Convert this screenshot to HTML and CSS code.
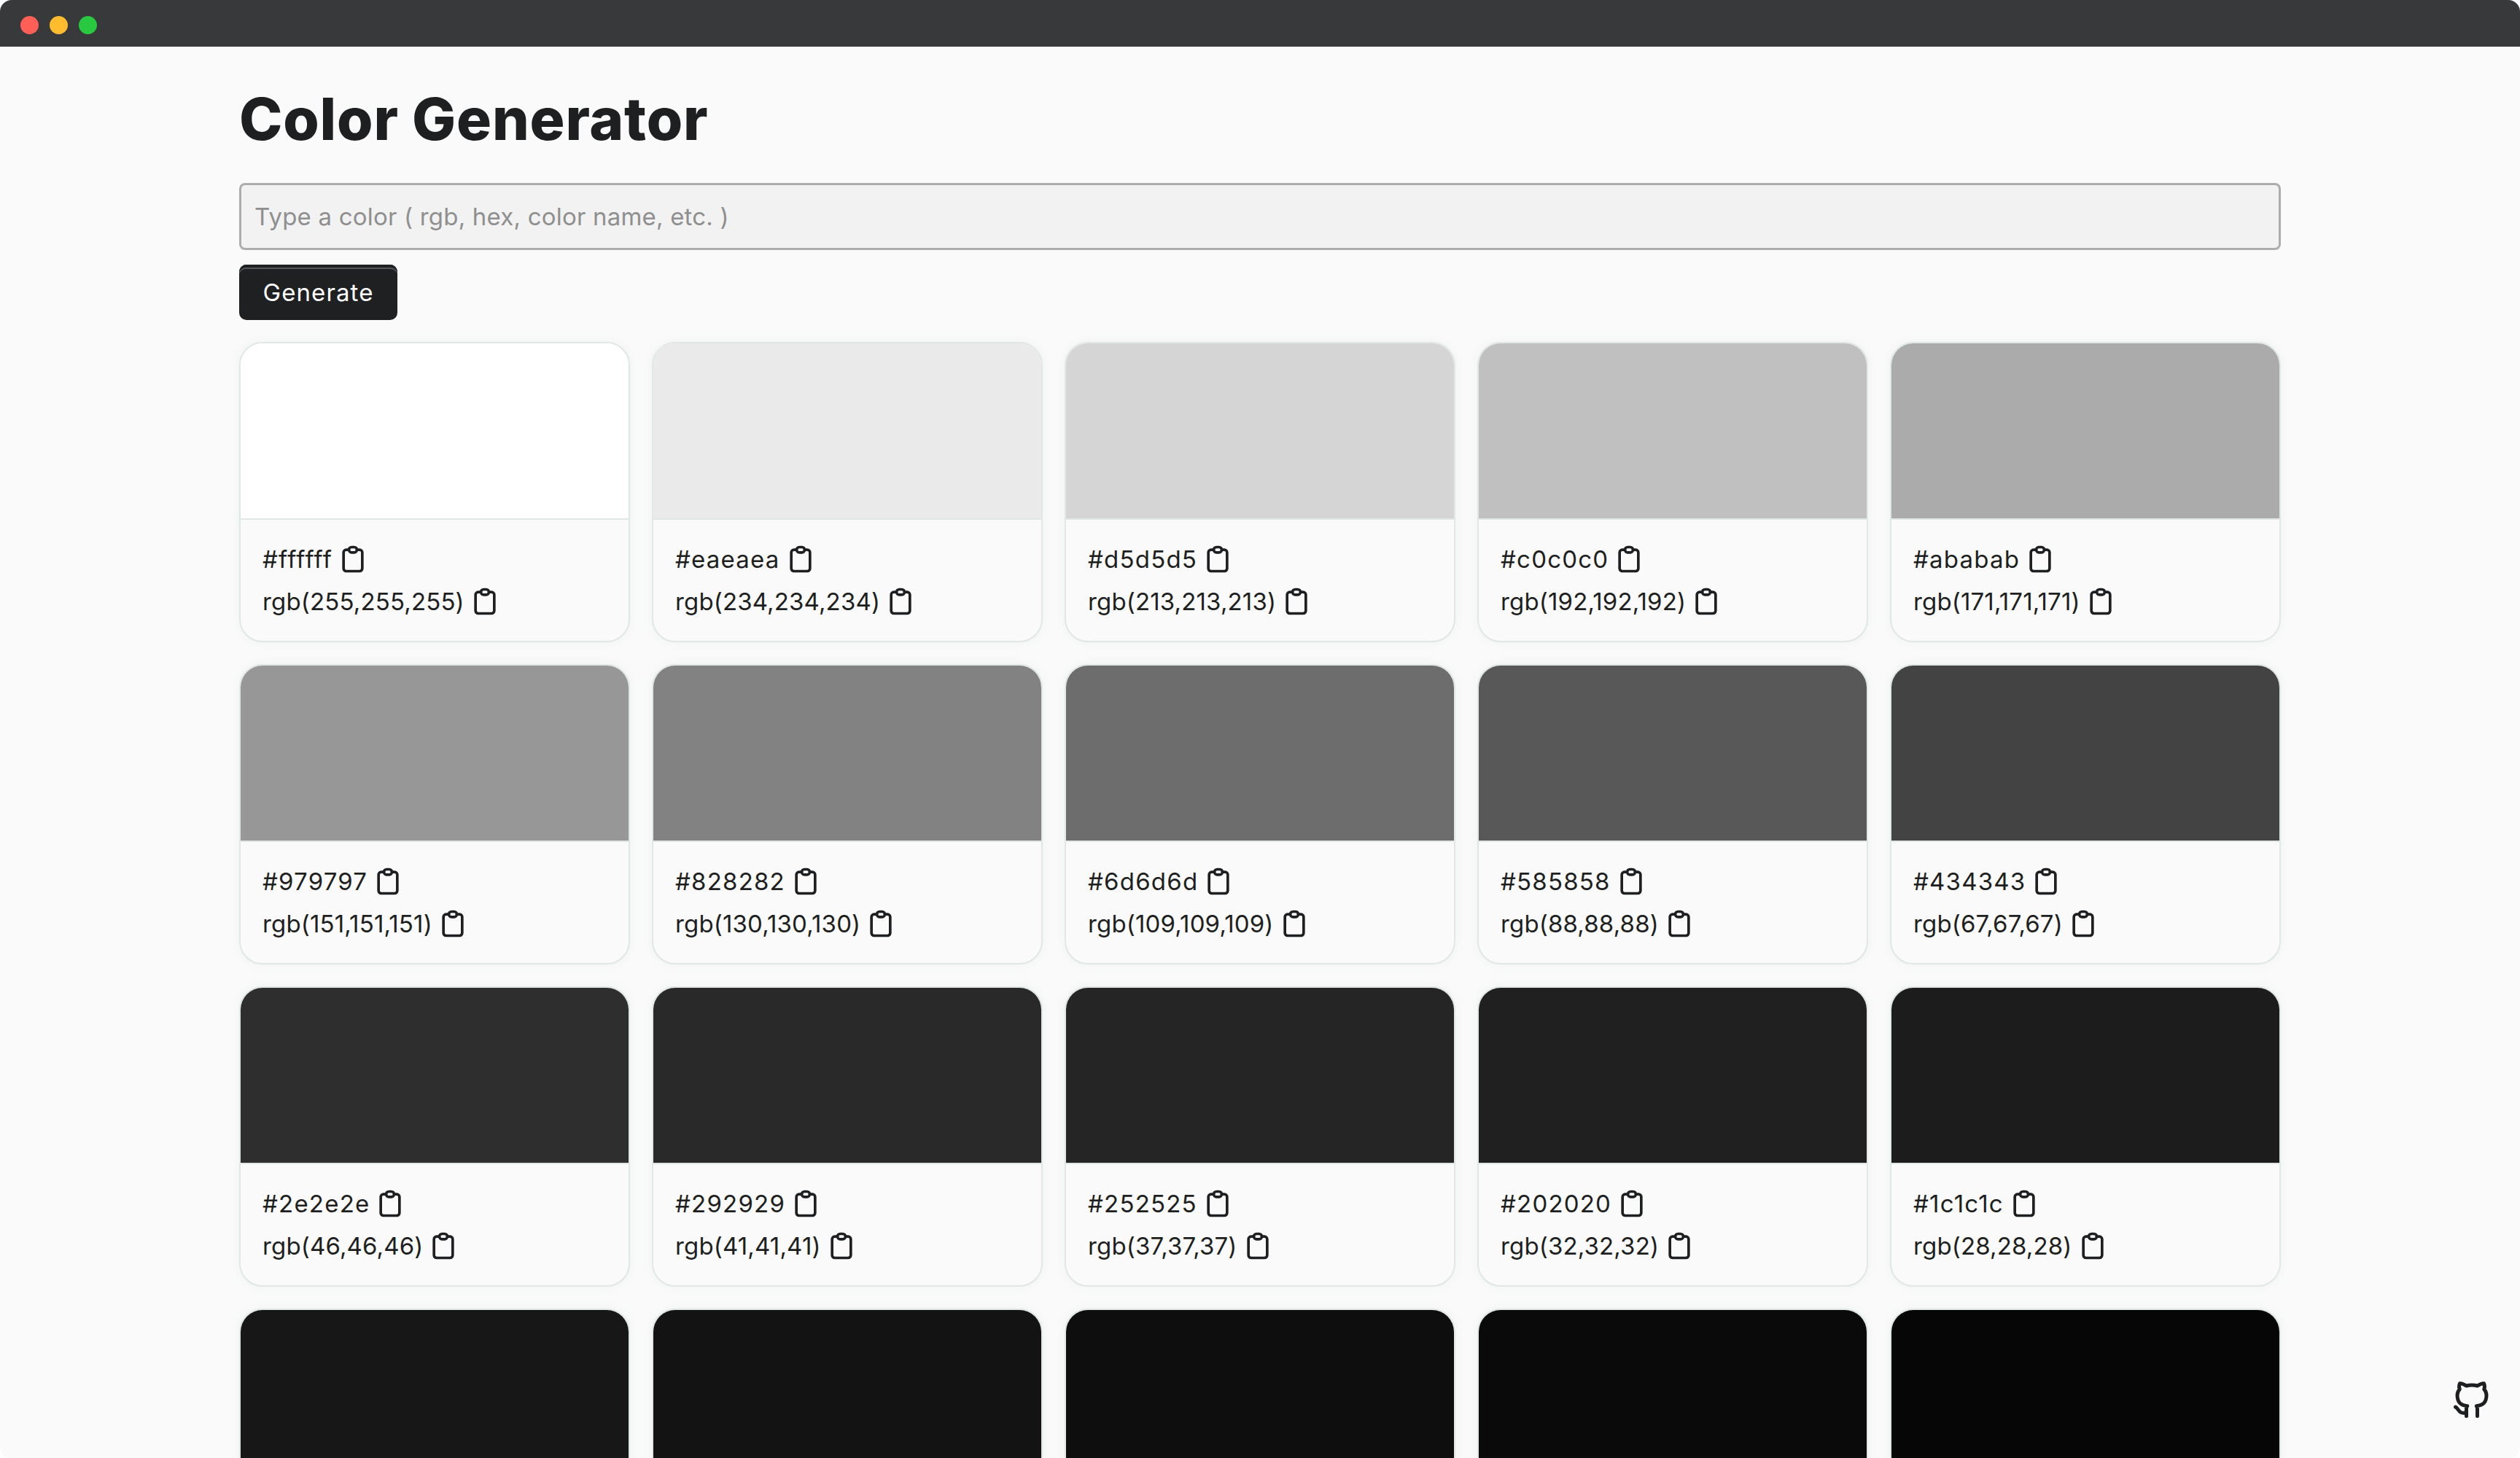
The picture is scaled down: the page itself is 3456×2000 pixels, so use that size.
FILE: index.html
```html
<!DOCTYPE html>
<html lang="en">
<head>
  <meta charset="UTF-8" />
  <title>Color Generator</title>
  <link rel="stylesheet" href="styles.css">
</head>
<body>

<svg class="sprite" width="0" height="0" aria-hidden="true">
  <symbol id="clip" viewBox="0 0 24 24">
    <path d="M9 5h-2a2 2 0 0 0 -2 2v12a2 2 0 0 0 2 2h10a2 2 0 0 0 2 -2v-12a2 2 0 0 0 -2 -2h-2" />
    <rect x="9" y="3" width="6" height="4" rx="2" />
  </symbol>
</svg>

<div class="window">
  <div class="titlebar">
    <span class="dot red"></span>
    <span class="dot yellow"></span>
    <span class="dot green"></span>
  </div>

  <main class="page">
    <h1>Color Generator</h1>
    <input class="color-input" type="text" placeholder="Type a color ( rgb, hex, color name, etc. )" />
    <button class="generate">Generate</button>

    <div class="cards">
      <div class="card">
        <div class="swatch s-ffffff"></div>
        <div class="info">
          <p>#ffffff <svg class="icon"><use href="#clip" /></svg></p>
          <p>rgb(255,255,255) <svg class="icon"><use href="#clip" /></svg></p>
        </div>
      </div>
      <div class="card">
        <div class="swatch s-eaeaea"></div>
        <div class="info">
          <p>#eaeaea <svg class="icon"><use href="#clip" /></svg></p>
          <p>rgb(234,234,234) <svg class="icon"><use href="#clip" /></svg></p>
        </div>
      </div>
      <div class="card">
        <div class="swatch s-d5d5d5"></div>
        <div class="info">
          <p>#d5d5d5 <svg class="icon"><use href="#clip" /></svg></p>
          <p>rgb(213,213,213) <svg class="icon"><use href="#clip" /></svg></p>
        </div>
      </div>
      <div class="card">
        <div class="swatch s-c0c0c0"></div>
        <div class="info">
          <p>#c0c0c0 <svg class="icon"><use href="#clip" /></svg></p>
          <p>rgb(192,192,192) <svg class="icon"><use href="#clip" /></svg></p>
        </div>
      </div>
      <div class="card">
        <div class="swatch s-ababab"></div>
        <div class="info">
          <p>#ababab <svg class="icon"><use href="#clip" /></svg></p>
          <p>rgb(171,171,171) <svg class="icon"><use href="#clip" /></svg></p>
        </div>
      </div>

      <div class="card">
        <div class="swatch s-979797"></div>
        <div class="info">
          <p>#979797 <svg class="icon"><use href="#clip" /></svg></p>
          <p>rgb(151,151,151) <svg class="icon"><use href="#clip" /></svg></p>
        </div>
      </div>
      <div class="card">
        <div class="swatch s-828282"></div>
        <div class="info">
          <p>#828282 <svg class="icon"><use href="#clip" /></svg></p>
          <p>rgb(130,130,130) <svg class="icon"><use href="#clip" /></svg></p>
        </div>
      </div>
      <div class="card">
        <div class="swatch s-6d6d6d"></div>
        <div class="info">
          <p>#6d6d6d <svg class="icon"><use href="#clip" /></svg></p>
          <p>rgb(109,109,109) <svg class="icon"><use href="#clip" /></svg></p>
        </div>
      </div>
      <div class="card">
        <div class="swatch s-585858"></div>
        <div class="info">
          <p>#585858 <svg class="icon"><use href="#clip" /></svg></p>
          <p>rgb(88,88,88) <svg class="icon"><use href="#clip" /></svg></p>
        </div>
      </div>
      <div class="card">
        <div class="swatch s-434343"></div>
        <div class="info">
          <p>#434343 <svg class="icon"><use href="#clip" /></svg></p>
          <p>rgb(67,67,67) <svg class="icon"><use href="#clip" /></svg></p>
        </div>
      </div>

      <div class="card">
        <div class="swatch s-2e2e2e"></div>
        <div class="info">
          <p>#2e2e2e <svg class="icon"><use href="#clip" /></svg></p>
          <p>rgb(46,46,46) <svg class="icon"><use href="#clip" /></svg></p>
        </div>
      </div>
      <div class="card">
        <div class="swatch s-292929"></div>
        <div class="info">
          <p>#292929 <svg class="icon"><use href="#clip" /></svg></p>
          <p>rgb(41,41,41) <svg class="icon"><use href="#clip" /></svg></p>
        </div>
      </div>
      <div class="card">
        <div class="swatch s-252525"></div>
        <div class="info">
          <p>#252525 <svg class="icon"><use href="#clip" /></svg></p>
          <p>rgb(37,37,37) <svg class="icon"><use href="#clip" /></svg></p>
        </div>
      </div>
      <div class="card">
        <div class="swatch s-202020"></div>
        <div class="info">
          <p>#202020 <svg class="icon"><use href="#clip" /></svg></p>
          <p>rgb(32,32,32) <svg class="icon"><use href="#clip" /></svg></p>
        </div>
      </div>
      <div class="card">
        <div class="swatch s-1c1c1c"></div>
        <div class="info">
          <p>#1c1c1c <svg class="icon"><use href="#clip" /></svg></p>
          <p>rgb(28,28,28) <svg class="icon"><use href="#clip" /></svg></p>
        </div>
      </div>

      <!-- last row runs off the bottom of the window -->
      <div class="card"><div class="swatch s-r4a"></div></div>
      <div class="card"><div class="swatch s-r4b"></div></div>
      <div class="card"><div class="swatch s-r4c"></div></div>
      <div class="card"><div class="swatch s-r4d"></div></div>
      <div class="card"><div class="swatch s-r4e"></div></div>
    </div>
  </main>

  <svg class="github" viewBox="0 0 24 24" aria-label="GitHub">
    <path d="M9 19c-4.3 1.4 -4.3 -2.5 -6 -3m12 5v-3.5c0 -1 .1 -1.4 -.5 -2c2.8 -.3 5.5 -1.4 5.5 -6a4.6 4.6 0 0 0 -1.3 -3.2a4.2 4.2 0 0 0 -.1 -3.2s-1.1 -.3 -3.5 1.3a12.3 12.3 0 0 0 -6.2 0c-2.4 -1.6 -3.5 -1.3 -3.5 -1.3a4.2 4.2 0 0 0 -.1 3.2a4.6 4.6 0 0 0 -1.3 3.2c0 4.6 2.7 5.7 5.5 6c-.6 .6 -.6 1.2 -.5 2v3.5" />
  </svg>
</div>

</body>
</html>
```

FILE: styles.css
```css
* {
  box-sizing: border-box;
}

html, body {
  margin: 0;
  height: 100%;
  background: #fff;
  overflow: hidden;
}

body {
  color: #1e1f21;
  font-family: "Inter", "Liberation Sans", sans-serif;
}

.sprite {
  position: absolute;
}

.window {
  position: relative;
  height: 2000px;
  overflow: hidden;
  background: #fafafa;
  border-radius: 16px;
}

.titlebar {
  display: flex;
  align-items: center;
  gap: 15px;
  height: 64px;
  padding: 4px 0 0 28px;
  background: #38393b;
}

.dot {
  width: 25px;
  height: 25px;
  border-radius: 50%;
}

.red { background: #ff5f57; }
.yellow { background: #febc2e; }
.green { background: #28c840; }

.page {
  display: flex;
  flex-direction: column;
  align-items: flex-start;
  padding: 0 328px;
}

h1 {
  margin: 54px 0 0;
  font-size: 80px;
  line-height: 90px;
  font-weight: 800;
  letter-spacing: 0.8px;
}

.color-input {
  width: 100%;
  height: 92px;
  margin-top: 43px;
  padding: 0 18px;
  border: 3px solid #adadad;
  border-radius: 8px;
  background: #f2f2f2;
  color: #1e1f21;
  font-family: inherit;
  font-size: 33px;
  letter-spacing: 0.2px;
}

.color-input::placeholder {
  color: #8f8f8f;
  opacity: 1;
}

.generate {
  width: 217px;
  height: 76px;
  margin-top: 20px;
  padding: 0;
  border: none;
  border-radius: 10px;
  background: #1f2022;
  box-shadow: inset 0 5px 0 -1px #1f2022, inset 0 7px 0 -1px #55565a;
  color: #fff;
  font-family: inherit;
  font-size: 33px;
  letter-spacing: 1.1px;
}

.cards {
  display: grid;
  grid-template-columns: repeat(5, 1fr);
  gap: 30px;
  width: 100%;
  margin-top: 30px;
}

.card {
  height: 412px;
  border: 2px solid #dfe7e7;
  border-radius: 32px;
  overflow: hidden;
  background: #fafafa;
  box-shadow: 0 0 10px 3px #f2f4f4;
}

.swatch {
  height: 240px;
}

.s-ffffff { background: #ffffff; }
.s-eaeaea { background: #eaeaea; }
.s-d5d5d5 { background: #d5d5d5; }
.s-c0c0c0 { background: #c0c0c0; }
.s-ababab { background: #ababab; }
.s-979797 { background: #979797; }
.s-828282 { background: #828282; }
.s-6d6d6d { background: #6d6d6d; }
.s-585858 { background: #585858; }
.s-434343 { background: #434343; }
.s-2e2e2e { background: #2e2e2e; }
.s-292929 { background: #292929; }
.s-252525 { background: #252525; }
.s-202020 { background: #202020; }
.s-1c1c1c { background: #1c1c1c; }
.s-r4a { background: #171717; height: 412px; }
.s-r4b { background: #131313; height: 412px; }
.s-r4c { background: #0e0e0e; height: 412px; }
.s-r4d { background: #0a0a0a; height: 412px; }
.s-r4e { background: #060606; height: 412px; }

.info {
  padding: 25px 30px 0;
  border-top: 2px solid #dfe7e7;
  font-size: 33px;
  line-height: 58px;
  letter-spacing: 0.15px;
}

.info p {
  display: flex;
  align-items: center;
  gap: 6px;
  margin: 0;
  height: 58px;
}

.info p:first-child {
  letter-spacing: 1.2px;
}

.icon {
  width: 44px;
  height: 44px;
  fill: none;
  stroke: #1e1f21;
  stroke-width: 2;
  stroke-linecap: round;
  stroke-linejoin: round;
}

.github {
  position: absolute;
  right: 36px;
  bottom: 50px;
  width: 60px;
  height: 60px;
  fill: none;
  stroke: #1e1f21;
  stroke-width: 2;
  stroke-linecap: round;
  stroke-linejoin: round;
}
```
